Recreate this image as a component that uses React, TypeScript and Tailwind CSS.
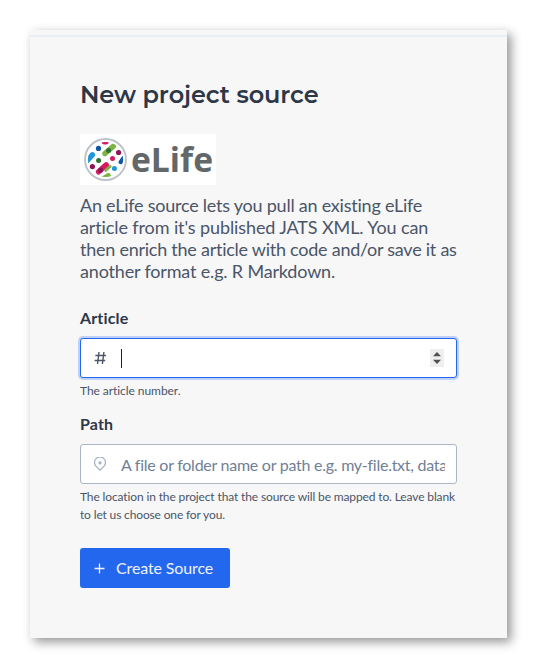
import type { ReactNode } from "react";

function ELifeLogo() {
  return (
    <svg width="136" height="51" viewBox="0 0 136 51" className="mb-[9px] block bg-white" role="img" aria-label="eLife">
      <defs>
        <clipPath id="disc">
          <circle cx="25.5" cy="25.5" r="17.6" />
        </clipPath>
      </defs>
      <circle cx="25.5" cy="25.5" r="20.5" fill="none" stroke="#bcc2c5" strokeWidth="1.8" />
      <g clipPath="url(#disc)" strokeLinecap="round" strokeWidth="5.4" fill="none">
        <path d="M24.4 7.8L26 7.8" stroke="#d81b60" />
        <path d="M33.3 12.2L25 19.6" stroke="#7cb342" />
        <path d="M12.4 20.8L6 28" stroke="#2196d8" />
        <path d="M44 23.5L40.8 28" stroke="#0d57a3" strokeWidth="4.4" />
        <path d="M26.2 30.8L18.6 37.8" stroke="#d81b60" />
        <path d="M30.2 32.4L25.6 36.4" stroke="#7cb342" strokeWidth="2.8" />
        <path d="M28.4 41.4L24 44" stroke="#7cb342" strokeWidth="4.8" />
      </g>
      <circle cx="18.5" cy="14.4" r="2.6" fill="#0d57a3" />
      <circle cx="28.6" cy="16.4" r="2.5" fill="#2e7030" />
      <circle cx="38.6" cy="18.5" r="2.6" fill="#8c1457" />
      <circle cx="18.6" cy="26.4" r="2.5" fill="#2e7030" />
      <circle cx="32.5" cy="24.4" r="2.5" fill="#d81b60" />
      <circle cx="12.4" cy="32.6" r="2.6" fill="#8c1457" />
      <circle cx="20.6" cy="36.2" r="2.5" fill="#8c1457" />
      <circle cx="34.4" cy="34.6" r="2.5" fill="#2196d8" />
      <text
        x="51"
        y="37.5"
        textLength="82"
        lengthAdjust="spacingAndGlyphs"
        className="fill-[#626769] font-['Open_Sans',sans-serif] text-[34px] font-bold"
      >
        eLife
      </text>
    </svg>
  );
}

function Label({ children }: { children: ReactNode }) {
  return <div className="mb-2 text-base leading-6 font-bold tracking-[0.15px] text-[#2d3748]">{children}</div>;
}

function Help({ children }: { children: ReactNode }) {
  return <p className="mt-1 text-xs leading-[18px] whitespace-nowrap text-[#4a5568]">{children}</p>;
}

export default function App() {
  return (
    <div className="h-[672px] w-[541px] overflow-hidden bg-white p-[30px] font-['Lato',sans-serif]">
      <main className="h-[608px] w-[477px] bg-[#f7f7f7] pt-[5px] shadow-[4px_4px_10px_rgba(0,0,0,0.42)]">
        <div className="h-[2px] bg-[#e9eff4]" />
        <div className="px-[50px] pt-[43px]">
          <h1 className="mb-[24px] h-[30px] font-['Montserrat','Inter',sans-serif] text-2xl leading-[30px] font-semibold tracking-[-0.08px] whitespace-nowrap text-[#2d3748]">
            New project source
          </h1>
          <ELifeLogo />
          <p className="mb-[24px] text-lg leading-[22px] whitespace-nowrap text-[#4a5568]">
            <span className="block tracking-[-0.23px]">An eLife source lets you pull an existing eLife</span>
            <span className="block tracking-[-0.11px]">article from it's published JATS XML. You can</span>
            <span className="block tracking-[-0.25px]">then enrich the article with code and/or save it as</span>
            <span className="block tracking-[-0.17px]">another format e.g. R Markdown.</span>
          </p>

          <Label>Article</Label>
          <div className="flex h-10 items-center rounded-[3px] border border-[#2467ef] bg-white pr-[12px] pl-[13px] shadow-[0_0_0_2px_#c0d1f7]">
            <svg width="12" height="14" viewBox="0 0 12 14" fill="none" stroke="#4a5568" strokeWidth="1.4">
              <path d="M5 1L3.5 13M9.9 1L8.4 13M1.4 4.5H12M0.6 9.5H11.2" />
            </svg>
            <span className="ml-[15px] h-[19px] w-px bg-[#1a202c]" />
            <span className="ml-auto flex h-[18px] w-[14px] items-center justify-center bg-[#efefef]">
              <svg width="8" height="12" viewBox="0 0 8 12" fill="#505050">
                <path d="M0 4.2L4 0L8 4.2ZM0 7.8L4 12L8 7.8Z" />
              </svg>
            </span>
          </div>
          <Help>
            <span className="tracking-[-0.06px]">The article number.</span>
          </Help>

          <div className="mt-3">
            <Label>Path</Label>
          </div>
          <div className="flex h-10 items-center rounded-[3px] border border-[#a9b6c7] bg-white pr-[11px] pl-[13px]">
            <svg width="12" height="14" viewBox="0 0 12 14" fill="none" stroke="#a9b5c4" className="shrink-0">
              <path d="M6 13.2L2.1 9.4A5.5 5.5 0 1 1 9.9 9.4Z" strokeWidth="1.3" />
              <circle cx="6" cy="5.9" r="1.6" fill="#a9b5c4" stroke="none" />
            </svg>
            <span className="ml-[15px] overflow-hidden pt-px text-base leading-6 tracking-[-0.26px] whitespace-nowrap text-[#718096]">
              A file or folder name or path e.g. my-file.txt, data
            </span>
          </div>
          <Help>
            <span className="block tracking-[-0.13px]">
              The location in the project that the source will be mapped to. Leave blank
            </span>
            <span className="block tracking-[-0.15px]">to let us choose one for you.</span>
          </Help>

          <button className="mt-6 flex h-10 w-[150px] items-center rounded-[3px] bg-[#2467ef] pl-[14px] text-base leading-6 text-[#edf2fc]">
            <svg width="11" height="11" viewBox="0 0 11 11" stroke="currentColor" strokeWidth="1.3">
              <path d="M5.5 0.5V10.5M0.5 5.5H10.5" />
            </svg>
            <span className="ml-[11px] tracking-[-0.12px]">Create Source</span>
          </button>
        </div>
      </main>
    </div>
  );
}
